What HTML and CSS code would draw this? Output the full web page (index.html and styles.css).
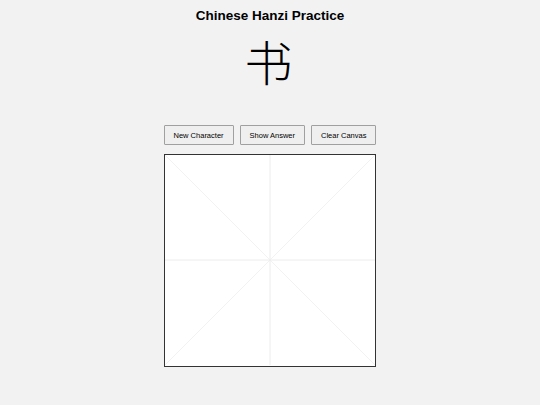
FILE: index.html
```html
<!DOCTYPE html>
<html lang="en">
<head>
<meta charset="utf-8">
<title>Chinese Hanzi Practice</title>
<link rel="stylesheet" href="styles.css">
</head>
<body>
<main class="app">
  <h1 class="title">Chinese Hanzi Practice</h1>
  <div class="hanzi">书</div>
  <div class="controls">
    <button class="btn">New Character</button>
    <button class="btn">Show Answer</button>
    <button class="btn">Clear Canvas</button>
  </div>
  <div class="board">
    <svg class="grid" viewBox="0 0 210 210" width="210" height="210">
      <line x1="0" y1="0" x2="210" y2="210" class="diag"/>
      <line x1="210" y1="0" x2="0" y2="210" class="diag"/>
      <line x1="105" y1="0" x2="105" y2="210" class="axis"/>
      <line x1="0" y1="105" x2="210" y2="105" class="axis"/>
    </svg>
  </div>
</main>
</body>
</html>
```
FILE: styles.css
```css
html, body {
  margin: 0;
  padding: 0;
}
body {
  background: #f2f2f2;
  font-family: "Liberation Sans", Arial, sans-serif;
  color: #000;
}
.app {
  display: flex;
  flex-direction: column;
  align-items: center;
  padding-top: 8px;
}
.title {
  margin: 0;
  font-size: 13.5px;
  font-weight: bold;
  line-height: 16px;
}
.hanzi {
  margin-top: 8px;
  margin-right: 3px;
  font-family: "Noto Sans CJK SC", sans-serif;
  font-weight: 300;
  font-size: 48px;
  line-height: 56px;
  height: 56px;
}
.controls {
  margin-top: 37px;
  display: flex;
  gap: 6px;
}
.btn {
  box-sizing: border-box;
  height: 20px;
  padding: 0 9px;
  font-family: "Liberation Sans", Arial, sans-serif;
  font-size: 7.5px;
  color: #000;
  background: #efefef;
  border: 1px solid #a0a0a0;
  border-radius: 1px;
}
.board {
  margin-top: 9px;
  width: 210px;
  height: 211px;
  border: 1px solid #333;
  background: #fff;
}
.grid {
  display: block;
}
.diag {
  stroke: #ececec;
  stroke-width: 0.7;
}
.axis {
  stroke: #ececec;
  stroke-width: 1;
}
```
